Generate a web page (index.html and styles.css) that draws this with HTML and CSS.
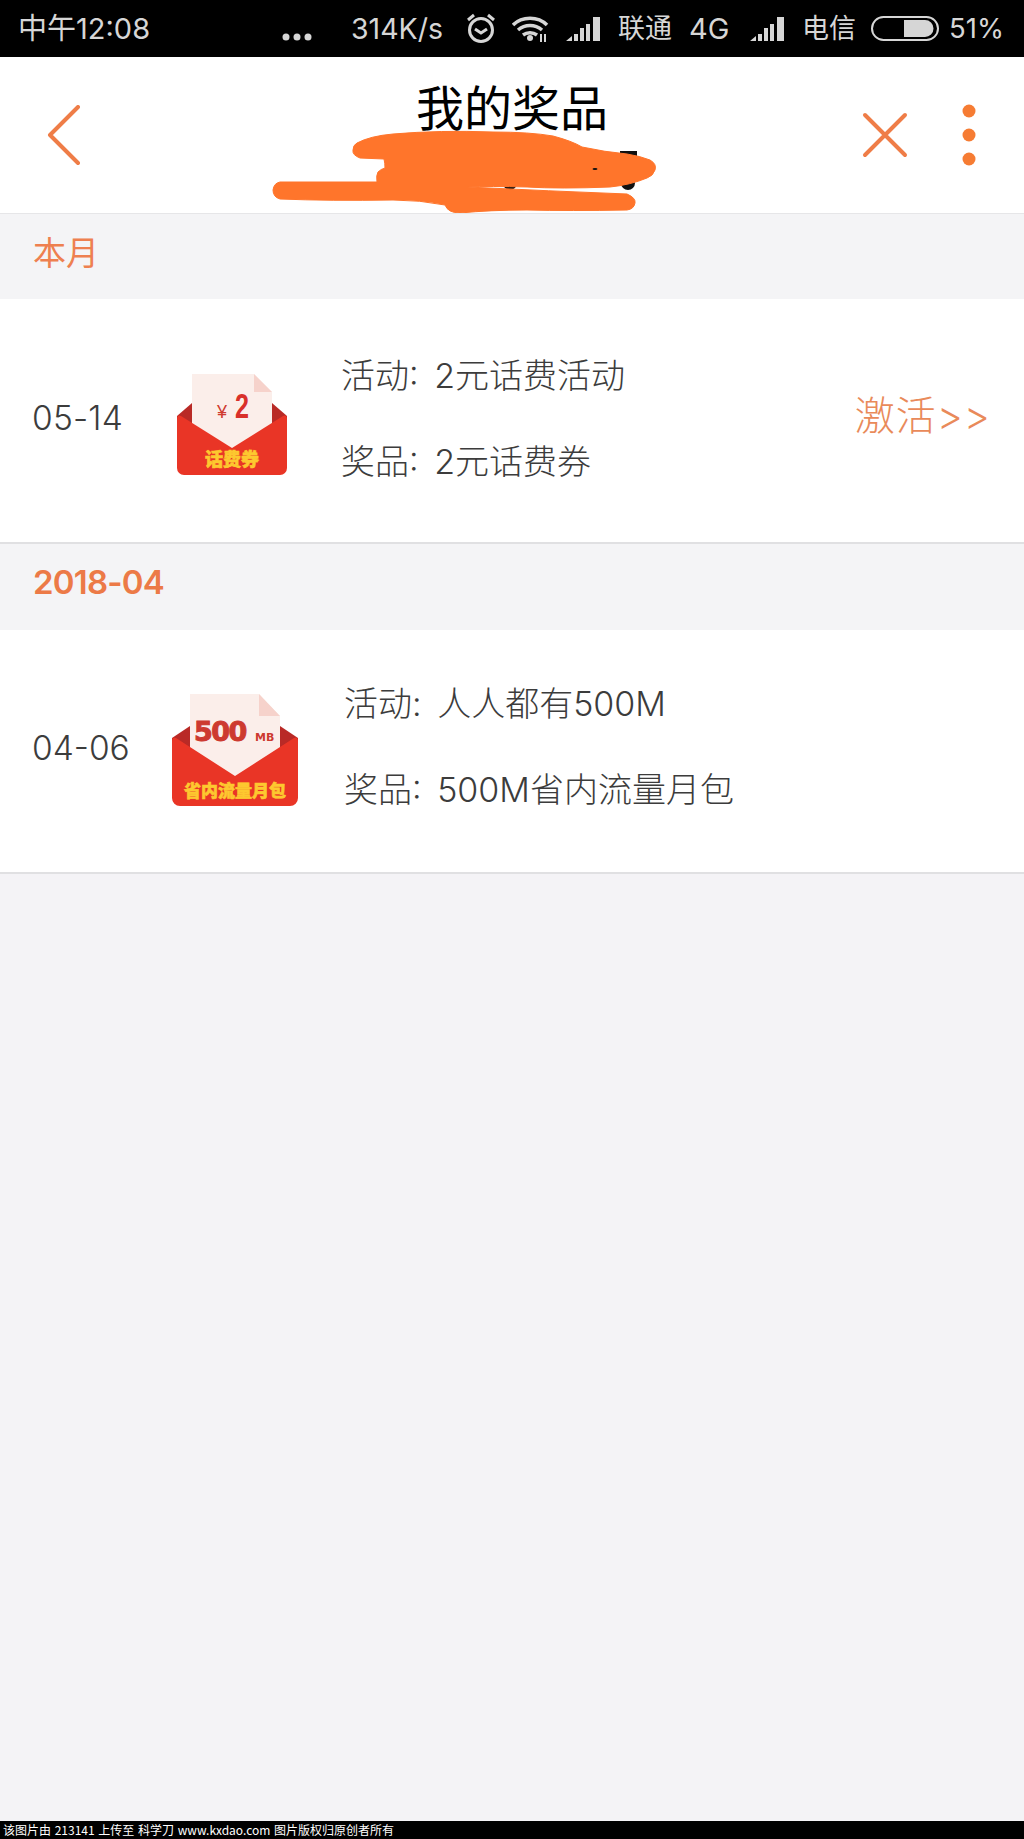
FILE: index.html
```html
<!DOCTYPE html>
<html lang="zh">
<head>
<meta charset="utf-8">
<title>我的奖品</title>
<link rel="stylesheet" href="styles.css">
</head>
<body>
<div class="page">
  <div class="status">
    <span class="st st-time">中午12:08</span>
    <svg class="st-dots" viewBox="0 0 30 8" width="30" height="8"><circle cx="4" cy="4" r="3.5"/><circle cx="15" cy="4" r="3.5"/><circle cx="26" cy="4" r="3.5"/></svg>
    <span class="st st-speed">314K/s</span>
    <svg class="st-alarm" viewBox="0 0 30 32" width="30" height="32"><circle cx="15" cy="18" r="11.5"/><path d="M9 17l6 4 6-4M2 8l6-5M28 8l-6-5"/></svg>
    <svg class="st-wifi" viewBox="0 0 38 26" width="38" height="26"><path d="M1 9C10 0 26 0 35 9M6 14c7-6 17-6 24 0M11 19c4-3 10-3 14 0"/><circle cx="18" cy="22" r="3" class="fill"/><path d="M29 18v8M33 18v8" class="thin"/></svg>
    <svg class="st-signal" viewBox="0 0 36 26" width="36" height="26"><path d="M0 25l6-5v5zM8 25v-7h4v7zM14 25V12h4v13zM20 25V8h4v17zM27 25V1h7v24z"/></svg>
    <span class="st st-cu">联通</span>
    <span class="st st-4g">4G</span>
    <svg class="st-signal st-signal2" viewBox="0 0 36 26" width="36" height="26"><path d="M0 25l6-5v5zM8 25v-7h4v7zM14 25V12h4v13zM20 25V8h4v17zM27 25V1h7v24z"/></svg>
    <span class="st st-ct">电信</span>
    <svg class="st-batt" viewBox="0 0 68 25" width="68" height="25"><rect x="1" y="1" width="66" height="23" rx="11.5" class="frame"/><path d="M33 4h21a8.500 8.500 0 0 1 0 17H33z" class="fill"/></svg>
    <span class="st st-pct">51%</span>
  </div>

  <header class="nav">
    <svg class="nav-back" viewBox="0 0 34 62" width="34" height="62"><path d="M31 2L3 30l28 28"/></svg>
    <div class="nav-title">我的奖品</div>
    <svg class="nav-close" viewBox="0 0 46 46" width="46" height="46"><path d="M3 3l40 40M43 3L3 43"/></svg>
    <svg class="nav-more" viewBox="0 0 14 62" width="14" height="62"><circle cx="7" cy="7" r="6.500"/><circle cx="7" cy="31" r="6.500"/><circle cx="7" cy="55" r="6.500"/></svg>
    <svg class="scribble" viewBox="0 0 1024 156" width="1024" height="156">
      <circle class="ink" cx="510" cy="126" r="7"/><circle class="ink" cx="628" cy="126" r="7"/><rect class="ink" x="620" y="94" width="17" height="6"/>
      <path class="mark" d="M357 86Q370 79 393 77Q440 73 493 75Q530 75 553 79Q572 84 582 90Q605 95 627 97Q640 99 650 103Q657 107 655 113Q653 119 647 121Q630 128 610 130Q560 132 527 130Q490 129 467 130Q550 134 627 137Q636 141 635 146Q634 152 627 153Q570 154 527 153Q490 153 460 156Q448 156 445 148Q420 143 393 143Q330 144 280 142Q273 140 273 133Q274 126 280 125L377 125Q376 118 378 115Q381 112 385 111Q385 106 384 102L360 101Q352 98 353 93Q353 88 357 86Z"/>
      <ellipse class="ink" cx="595" cy="112" rx="2.500" ry="1"/>
    </svg>
  </header>

  <div class="section">本月</div>
  <div class="row">
    <div class="date">05-14</div>
    <svg class="prize prize-a" viewBox="0 0 110 102" width="110" height="102">
      <path d="M0 42L15 29h80l15 13v18H0z" fill="#b92a26"/>
      <path d="M15 0h62l18 18v70H15z" fill="#fbeeea"/>
      <path d="M77 0l18 18H77z" fill="#f6d2cb"/>
      <text x="40" y="44" class="p-yen">¥</text>
      <text x="58" y="44" class="p-two" textLength="14" lengthAdjust="spacingAndGlyphs">2</text>
      <path d="M0 45q0-5 4-3l51 32 51-32q4-2 4 3v49a7 7 0 0 1-7 7H7a7 7 0 0 1-7-7z" fill="#e93526"/>
      <text x="55" y="92" text-anchor="middle" class="p-label">话费券</text>
    </svg>
    <div class="info">
      <div class="line">活动: 2元话费活动</div>
      <div class="line">奖品: 2元话费券</div>
    </div>
    <div class="action">激活&gt;&gt;</div>
  </div>

  <div class="section section-bold">2018-04</div>
  <div class="row row-b">
    <div class="date date-b">04-06</div>
    <svg class="prize prize-b" viewBox="0 0 126 114" width="126" height="114">
      <path d="M0 44L18 32h90l18 12v18H0z" fill="#b92a26"/>
      <path d="M18 0h69l21 22v76H18z" fill="#fbeeea"/>
      <path d="M87 0l21 22H87z" fill="#f6d2cb"/>
      <text x="22" y="47" class="p-500">500</text>
      <text x="83" y="47" class="p-mb">MB</text>
      <path d="M0 47q0-5 4-3l59 38 59-38q4-2 4 3v57a8 8 0 0 1-8 8H8a8 8 0 0 1-8-8z" fill="#e93526"/>
      <text x="63" y="103" text-anchor="middle" class="p-label p-label-b">省内流量月包</text>
    </svg>
    <div class="info">
      <div class="line">活动: 人人都有500M</div>
      <div class="line">奖品: 500M省内流量月包</div>
    </div>
  </div>

  <div class="fill-space"></div>
  <footer class="credit">该图片由 213141 上传至 科学刀 www.kxdao.com 图片版权归原创者所有</footer>
</div>
</body>
</html>
```

FILE: styles.css
```css
* { box-sizing: border-box; }
html, body { margin: 0; padding: 0; }
body {
  width: 1024px;
  height: 1839px;
  overflow: hidden;
  font-family: "Noto Sans CJK SC", "Noto Sans", sans-serif;
  background: #f4f3f6;
  color: #333;
}
.page { display: flex; flex-direction: column; height: 1839px; }

/* Status bar */
.status {
  height: 57px;
  flex: none;
  background: #000;
  display: flex;
  align-items: center;
  color: #d6d6d6;
  fill: #d6d6d6;
  padding-left: 18px;
}
.st { font-size: 29px; line-height: 57px; white-space: nowrap; font-family: "Inter", "Noto Sans CJK SC", sans-serif; font-weight: 400; }
.st-time { width: 264px; font-size: 29px; }
.st-dots { flex: none; margin-top: 16px; }
.st-speed { margin-left: 39px; width: 96px; font-size: 28.500px; }
.st-alarm { flex: none; margin-left: 19px; fill: none; stroke: #d6d6d6; stroke-width: 3; margin-top: -2px; }
.st-wifi { flex: none; margin-left: 16px; fill: none; stroke: #d6d6d6; stroke-width: 3.500; }
.st-wifi .fill { fill: #d6d6d6; stroke: none; }
.st-wifi .thin { stroke-width: 2; }
.st-signal { flex: none; margin-left: 16px; }
.st-cu { margin-left: 16px; width: 56px; font-size: 27px; }
.st-4g { margin-left: 15px; width: 44px; font-size: 29px; }
.st-signal2 { margin-left: 17px; }
.st-ct { margin-left: 16px; width: 56px; font-size: 27px; }
.st-batt { flex: none; margin-left: 13px; }
.st-batt .frame { fill: none; stroke: #d6d6d6; stroke-width: 2; }
.st-batt .fill { fill: #d6d6d6; }
.st-pct { margin-left: 10px; font-size: 27.500px; }

/* Nav */
.nav {
  position: relative;
  flex: none;
  height: 157px;
  background: #fff;
  border-bottom: 1px solid #e6e6e8;
  display: flex;
  align-items: flex-start;
}
.nav-back { flex: none; margin: 48px 0 0 47px; fill: none; stroke: #ef7d47; stroke-width: 4; stroke-linecap: round; stroke-linejoin: round; }
.nav-title {
  position: absolute;
  left: 0;
  right: 0;
  top: 18px;
  text-align: center;
  font-size: 48px;
  line-height: 60px;
  color: #000;
}
.nav-close { flex: none; margin: 55px 0 0 781px; fill: none; stroke: #ef7d47; stroke-width: 4; stroke-linecap: round; }
.nav-more { flex: none; margin: 47px 0 0 54px; fill: #f67c33; }
.scribble { position: absolute; left: 0; top: 0; }
.scribble .mark { fill: #ff752b; stroke: #ff752b; stroke-width: 1; stroke-linejoin: round; }
.scribble .ink { fill: #111; }

/* Sections */
.section {
  flex: none;
  height: 85px;
  padding: 0 0 0 33px;
  font-size: 33px;
  line-height: 74px;
  color: #ee8050;
  background: #f4f4f6;
}
.section-bold { font-family: "Inter", "Noto Sans CJK SC", sans-serif; font-weight: 600; font-size: 33px; line-height: 76px; height: 86px; color: #ec7a47; letter-spacing: -0.8px; }

/* Rows */
.row {
  flex: none;
  height: 245px;
  background: #fff;
  border-bottom: 2px solid #e0e0e2;
  display: flex;
  align-items: center;
  font-family: "Inter", "Noto Sans CJK SC", sans-serif;
  font-weight: 300;
}
.row-b { height: 244px; }
.date { width: 177px; padding-left: 32px; font-size: 33.500px; color: #3c3c3c; flex: none; margin-top: -5px; letter-spacing: 0.2px; }
.date-b { width: 172px; margin-top: -6px; letter-spacing: 0; }
.prize { flex: none; display: block; }
.prize-a { margin: 8px 54px 0 0; }
.prize-b { margin: 0 46px 0 0; }
.info { flex: 1; display: flex; flex-direction: column; gap: 36px; margin-top: -3px; }
.row-b .info { margin-top: -9px; }
.line { font-size: 34px; line-height: 50px; color: #3c3c3c; white-space: nowrap; word-spacing: 6px; }
.action { flex: none; margin: -10px 33px 0 0; font-size: 40px; line-height: 50px; color: #e98a5a; letter-spacing: 1px; }

/* Icon text */
.p-yen { font-size: 18px; fill: #cf3a2f; font-family: "Liberation Sans", sans-serif; }
.p-two { font-size: 35px; font-weight: 700; fill: #d9302a; font-family: "Liberation Sans", sans-serif; }
.p-label { font-size: 18px; font-weight: 900; fill: #fdc82f; stroke: #fdc82f; stroke-width: 0.6; font-family: "Noto Sans CJK SC", sans-serif; }
.p-label-b { font-size: 17px; }
.p-500 { font-size: 27px; font-weight: 900; fill: #cd3a30; stroke: #cd3a30; stroke-width: 1; font-family: "DejaVu Sans", sans-serif; letter-spacing: -1.500px; }
.p-mb { font-size: 11px; font-weight: 700; fill: #cd3a30; font-family: "DejaVu Sans", sans-serif; }

.fill-space { flex: 1; background: #f4f3f6; }
.credit {
  flex: none;
  height: 18px;
  background: #000;
  color: #fff;
  font-size: 12px;
  line-height: 18px;
  padding-left: 3px;
  white-space: pre;
  word-spacing: 1px;
}
```
